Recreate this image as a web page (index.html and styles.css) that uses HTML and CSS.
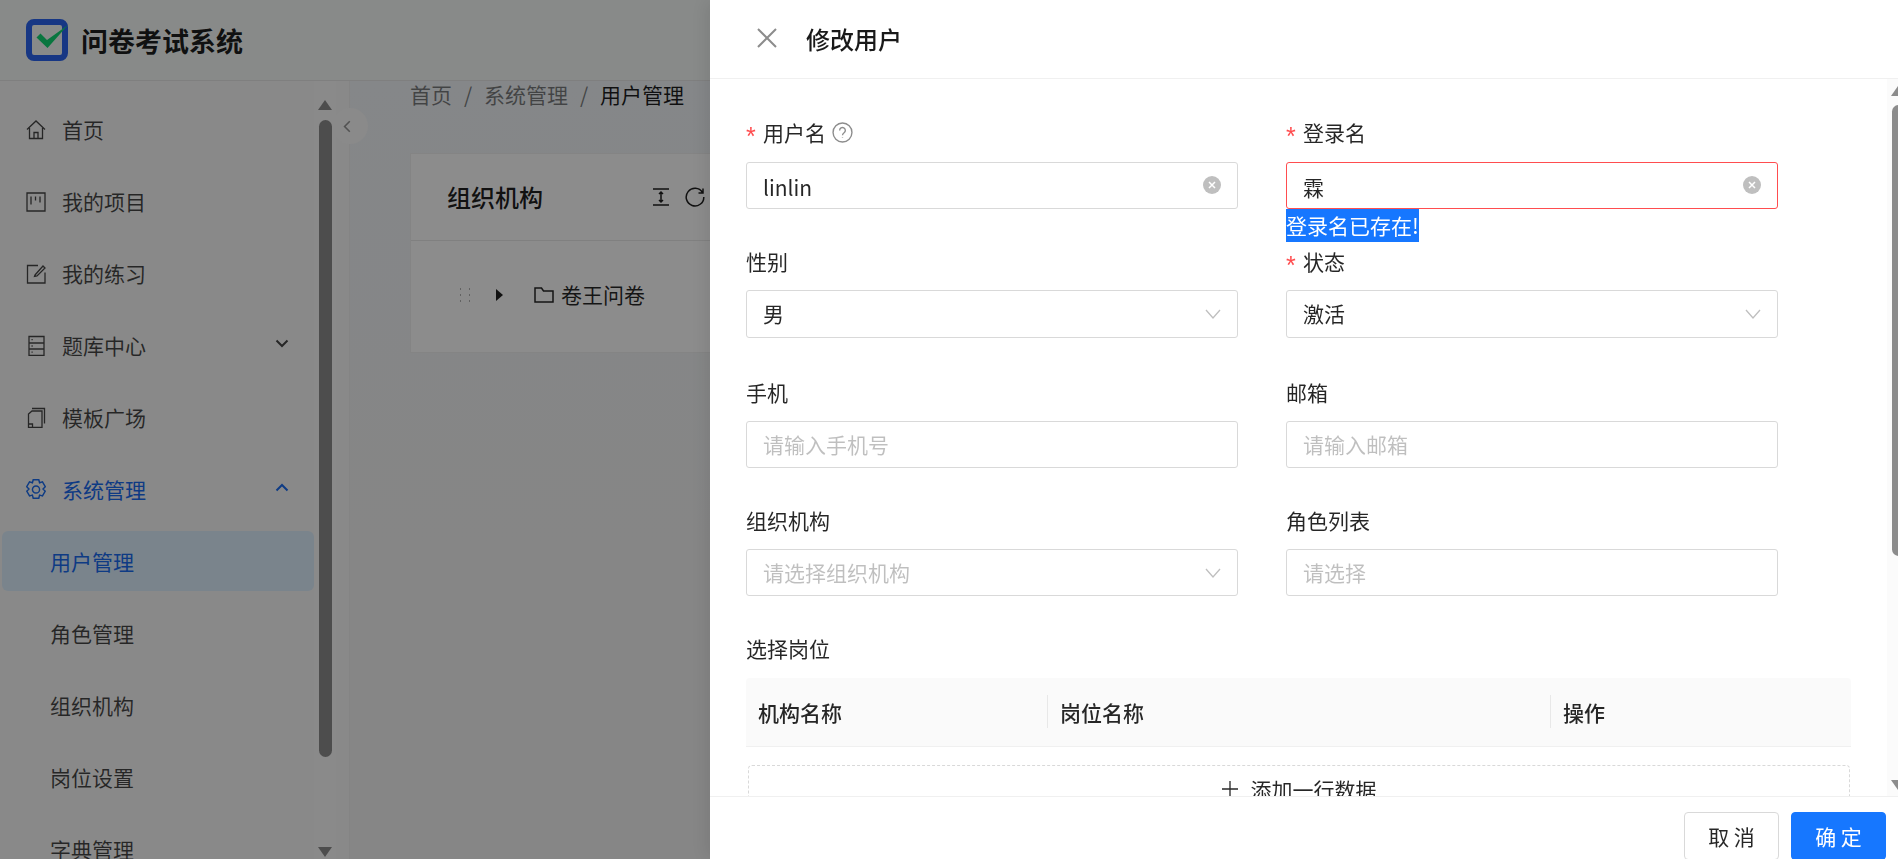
FILE: index.html
```html
<!DOCTYPE html>
<html lang="zh-CN">
<head>
<meta charset="utf-8">
<title>修改用户</title>
<link rel="stylesheet" href="styles.css">
</head>
<body>
<div class="app">
  <header class="topbar">
    <svg class="logo" viewBox="0 0 42 42" width="42" height="42">
      <rect class="logo-frame" x="3" y="3" width="36" height="36" rx="5"/>
      <path class="logo-check" d="M10.500 18.500 14.500 14.500 21 21 42 6 21.500 29z"/>
    </svg>
    <span class="brand">问卷考试系统</span>
  </header>
  <div class="shell">
    <aside class="side">
      <nav class="menu">
        <a class="item"><svg class="ico" viewBox="0 0 20 20"><path d="M1 10 10 1.500 19 10M3.500 8.500V19h13V8.500M8 19v-6h4v6"/></svg>首页</a>
        <a class="item"><svg class="ico" viewBox="0 0 20 20"><path d="M1 1.500h18v18H1zM5 5v8M9.500 5v4M14 5v6"/></svg>我的项目</a>
        <a class="item"><svg class="ico" viewBox="0 0 20 20"><path d="M12 2H1.500v17.500H19V9M9 11.500 17 2.500l2 2-8 8-2.500.5z"/></svg>我的练习</a>
        <a class="item"><svg class="ico" viewBox="0 0 20 20"><path d="M3 1h15v19H3zM3 7.500h15M3 13.500h15M5.500 4.200h1.200M5.500 10.500h1.200M5.500 16.700h1.200"/></svg>题库中心<svg class="chev" viewBox="0 0 14 9"><path d="M1.500 1.500 7 7l5.500-5.500"/></svg></a>
        <a class="item"><svg class="ico" viewBox="0 0 20 20"><path d="M6 1h12.500v15M2.500 6.500 6 3.500h10V20H2.500zM2.500 16.500H6.500V20"/></svg>模板广场</a>
        <a class="item active"><svg class="ico" viewBox="1.200 .8 17.600 18.800"><path d="M7.500 1.500h5l.7 2.700 2.600-.8 2.500 4.300-2 2 2 2-2.500 4.300-2.600-.8-.7 2.800h-5l-.7-2.800-2.600.8-2.500-4.300 2-2-2-2 2.500-4.300 2.600.8z"/><circle cx="10" cy="10.200" r="3.200"/></svg>系统管理<svg class="chev" viewBox="0 0 14 9"><path d="M1.500 7.500 7 2l5.500 5.500"/></svg></a>
        <a class="sub selected">用户管理</a>
        <a class="sub">角色管理</a>
        <a class="sub">组织机构</a>
        <a class="sub">岗位设置</a>
        <a class="sub">字典管理</a>
      </nav>
      <div class="side-track">
        <i class="tri up"></i>
        <i class="side-thumb"></i>
        <i class="tri down"></i>
      </div>
    </aside>
    <main class="main">
      <div class="crumbs">
        <span>首页</span><i>/</i><span>系统管理</span><i>/</i><b>用户管理</b>
      </div>
      <section class="card">
        <div class="card-head">
          <h2>组织机构</h2>
          <svg class="tool t1" viewBox="0 0 18 18" width="18" height="18"><path d="M1 1h16M1 17h16M9 4v10M7 6l2-2 2 2M7 12l2 2 2-2"/></svg>
          <svg class="tool" viewBox="0 0 20 20" width="20" height="20"><path d="M17.500 5.500A8.800 8.800 0 1 0 18.800 10M18 1.500v4.500h-4.500"/></svg>
        </div>
        <div class="tree-row">
          <svg class="dots" viewBox="0 0 12 16" width="12" height="16"><path d="M1 1h1v2H1zM10 1h1v2h-1zM1 7h1v2H1zM10 7h1v2h-1zM1 13h1v2H1zM10 13h1v2h-1z"/></svg>
          <i class="caret"></i>
          <svg class="folder" viewBox="0 0 20 16" width="20" height="16"><path d="M1 1h6.500l2 3H19v11H1z"/></svg>
          <span>卷王问卷</span>
        </div>
      </section>
    </main>
    <button class="collapse" type="button"><svg viewBox="0 0 10 16" width="8" height="13"><path d="M8.500 1.500 2 8l6.500 6.500"/></svg></button>
  </div>
</div>

<div class="mask"></div>

<aside class="drawer">
  <header class="d-head">
    <svg class="close" viewBox="0 0 20 20" width="20" height="20"><path d="M1 1l18 18M19 1 1 19"/></svg>
    <h1>修改用户</h1>
  </header>
  <div class="d-body">
    <form class="form">
      <div class="field r1">
        <label class="req">用户名<svg class="help" viewBox="0 0 20 20" width="21" height="21"><circle cx="10" cy="10" r="9"/><path d="M7.300 8a2.700 2.700 0 1 1 4.200 2.200c-1 .7-1.500 1.100-1.500 2.300M10 14.800v.4"/></svg></label>
        <div class="input"><span>linlin</span><i class="clear"><svg viewBox="0 0 18 18" width="18" height="18"><circle cx="9" cy="9" r="9"/><path d="M6 6l6 6M12 6l-6 6"/></svg></i></div>
      </div>
      <div class="field r1">
        <label class="req">登录名</label>
        <div class="input bad"><span>霖</span><i class="clear"><svg viewBox="0 0 18 18" width="18" height="18"><circle cx="9" cy="9" r="9"/><path d="M6 6l6 6M12 6l-6 6"/></svg></i></div>
        <div class="err"><span>登录名已存在!</span></div>
      </div>
      <div class="field r2">
        <label>性别</label>
        <div class="input"><span>男</span><svg class="arrow" viewBox="0 0 16 10" width="16" height="10"><path d="M1 1l7 8 7-8"/></svg></div>
      </div>
      <div class="field r2">
        <label class="req">状态</label>
        <div class="input"><span>激活</span><svg class="arrow" viewBox="0 0 16 10" width="16" height="10"><path d="M1 1l7 8 7-8"/></svg></div>
      </div>
      <div class="field">
        <label>手机</label>
        <div class="input ph"><span>请输入手机号</span></div>
      </div>
      <div class="field">
        <label>邮箱</label>
        <div class="input ph"><span>请输入邮箱</span></div>
      </div>
      <div class="field">
        <label>组织机构</label>
        <div class="input ph"><span>请选择组织机构</span><svg class="arrow" viewBox="0 0 16 10" width="16" height="10"><path d="M1 1l7 8 7-8"/></svg></div>
      </div>
      <div class="field">
        <label>角色列表</label>
        <div class="input ph"><span>请选择</span></div>
      </div>
    </form>
    <div class="posts">
      <label>选择岗位</label>
      <div class="thead">
        <div class="th c1">机构名称</div>
        <div class="th c2">岗位名称</div>
        <div class="th c3">操作</div>
      </div>
      <div class="add"><svg viewBox="0 0 16 16" width="16" height="16"><path d="M8 0v16M0 8h16"/></svg>添加一行数据</div>
    </div>
    <div class="d-track">
      <i class="tri up gray"></i>
      <i class="d-thumb"></i>
      <i class="tri down gray"></i>
    </div>
  </div>
  <footer class="d-foot">
    <button class="btn" type="button">取 消</button>
    <button class="btn primary" type="button">确 定</button>
  </footer>
</aside>
</body>
</html>
```
FILE: styles.css
```css
* { box-sizing: border-box; }
html, body { margin: 0; height: 100%; overflow: hidden; }
body {
  font-family: "Noto Sans CJK SC", "Noto Sans", sans-serif;
  font-size: 21px;
  color: rgba(0, 0, 0, .85);
  background: #f4f5f6;
}
svg { display: block; flex: none; fill: none; stroke: currentColor; }
i { font-style: normal; }

.app { height: 100vh; display: flex; flex-direction: column; }
.topbar {
  height: 81px; flex: none; display: flex; align-items: center; gap: 13px;
  padding-left: 26px; background: #f7fbf9; border-bottom: 1px solid #e8e8e8;
}
.logo { stroke: none; }
.logo-frame { fill: none; stroke: #2a64f0; stroke-width: 6; }
.logo-check { fill: #12d874; stroke: none; }
.brand { font-size: 27px; font-weight: 700; color: rgba(0, 0, 0, .88); }

.shell { flex: 1; display: flex; position: relative; min-height: 0; }
.side {
  width: 350px; flex: none; display: flex; background: #fafafa;
  border-right: 1px solid #f0f0f0; position: relative; overflow: hidden;
}
.menu { width: 314px; padding: 18px 0 0 2px; flex: none; }
.item, .sub { height: 60px; display: flex; align-items: center; margin-bottom: 12px; color: rgba(0, 0, 0, .72); }
.item { padding-left: 24px; position: relative; }
.ico { width: 20px; height: 21px; margin-right: 16px; stroke-width: 1.300; }
.chev { position: absolute; left: 273px; top: 24px; width: 14px; height: 9px; stroke-width: 2; }
.active { color: #1a6cf0; }
.sub { padding-left: 48px; border-radius: 6px; }
.selected { color: #1a6cf0; background: #dff0ff; }

.side-track { width: 22px; flex: none; position: relative; display: flex; flex-direction: column; align-items: center; padding-top: 19px; background: #fcfcfc; }
.side-thumb { width: 13px; height: 637px; margin-top: 10px; border-radius: 7px; background: #8c8c8c; }
.tri { display: block; width: 0; height: 0; border-left: 7px solid transparent; border-right: 7px solid transparent; }
.tri.up { border-bottom: 10px solid #8c8c8c; }
.tri.down { border-top: 10px solid #8c8c8c; position: absolute; bottom: 2px; left: 4px; }

.main {
  flex: 1; min-width: 0; padding: 0 0 0 60px;
  background: linear-gradient(180deg, #f2f6f9 0, #f4f4f4 60%);
}
.crumbs { height: 26px; display: flex; align-items: center; gap: 12px; color: rgba(0, 0, 0, .5); line-height: 26px; }
.crumbs i { width: 8px; text-align: center; }
.crumbs b { font-weight: 400; color: rgba(0, 0, 0, .88); }
.card { margin-top: 46px; height: 200px; background: #fff; border: 1px solid #f0f0f0; }
.card-head { height: 87px; display: flex; align-items: center; padding-left: 36px; border-bottom: 1px solid #eaeaea; }
.card-head h2 { margin: 0 109px 0 0; padding-bottom: 2px; font-size: 24px; font-weight: 500; color: rgba(0, 0, 0, .88); }
.tool { margin-right: 14px; stroke-width: 1.500; color: rgba(0, 0, 0, .88); }
.t1 { margin-right: 15px; }
.tree-row { display: flex; align-items: center; height: 107px; padding-left: 48px; }
.tree-row span { padding-bottom: 2px; }
.dots { stroke: none; fill: rgba(0, 0, 0, .3); margin-right: 25px; }
.caret { width: 0; height: 0; border-top: 6px solid transparent; border-bottom: 6px solid transparent; border-left: 7px solid rgba(0, 0, 0, .88); margin-right: 31px; }
.folder { stroke-width: 1.500; margin-right: 7px; color: rgba(0, 0, 0, .85); }

.collapse {
  position: absolute; left: 332px; top: 27px; width: 36px; height: 36px; padding: 0 0 0 11px;
  border: 0; border-radius: 50%; background: #fbfbfb; color: rgba(0, 0, 0, .4);
}
.collapse svg { stroke-width: 2; }

.mask { position: fixed; inset: 0; background: rgba(0, 0, 0, .45); }

.drawer {
  position: fixed; top: 0; right: 0; bottom: 0; width: 1188px;
  background: #fff; display: flex; flex-direction: column;
  box-shadow: -6px 0 16px rgba(0, 0, 0, .08);
}
.d-head { height: 79px; flex: none; display: flex; align-items: center; padding-left: 47px; border-bottom: 1px solid #f0f0f0; }
.close { stroke-width: 2; color: #8c8c8c; margin-top: -2px; }
.d-head h1 { margin: -2px 0 0 29px; font-size: 24px; font-weight: 500; color: rgba(0, 0, 0, .9); }

.d-body { flex: 1; min-height: 0; position: relative; overflow: hidden; padding: 0 47px 0 36px; }
.form { display: grid; grid-template-columns: 492px 492px; column-gap: 48px; width: 1032px; }
.field { height: 128px; padding-top: 37px; }
.r1 { height: 131px; padding-top: 39px; }
.r2 { height: 131px; }
label { display: flex; align-items: center; height: 29px; line-height: 29px; color: rgba(0, 0, 0, .85); }
.req::before {
  content: "*"; width: 10px; margin-right: 7px; color: #ff4d4f; line-height: 1;
  font-family: "Liberation Sans", sans-serif; font-size: 25px; transform: translateY(4px);
}
.help { margin-left: 6px; stroke: #8c8c8c; stroke-width: 1.300; }
.input {
  height: 47px; margin-top: 14px; display: flex; align-items: center; justify-content: space-between;
  padding: 0 17px; border: 1px solid #d9d9d9; border-radius: 3px; background: #fff;
  color: rgba(0, 0, 0, .85);
}
.input span { margin-top: -2px; margin-left: -1px; }
.r1 .input { margin-top: 15px; }
.r1 .input span { margin-top: 2px; }
.r2 .input { height: 48px; }
.input.bad { border-color: #ff4d4f; }
.input.ph { color: rgba(0, 0, 0, .25); }
.clear { color: #bfbfbf; margin: -1px -1px 0 0; }
.clear svg { fill: currentColor; stroke: none; }
.clear svg path { stroke: #fff; stroke-width: 1.500; fill: none; }
.arrow { stroke: #bfbfbf; stroke-width: 1.300; margin-right: -1px; }
.err { height: 33px; line-height: 33px; color: #fff; }
.err span { display: inline-block; height: 33px; background: #1677ff; white-space: nowrap; }

.posts { padding-top: 37px; }
.thead { display: flex; height: 69px; margin-top: 15px; width: 1105px; align-items: center; background: #fafafa; border-bottom: 1px solid #f0f0f0; border-radius: 4px 4px 0 0; font-weight: 500; color: rgba(0, 0, 0, .85); }
.th { padding-left: 13px; position: relative; }
.c1 { width: 301px; padding-left: 12px; }
.c2 { width: 503px; }
.c3 { flex: 1; }
.c2::before, .c3::before { content: ""; position: absolute; left: 0; top: -2px; height: 33px; width: 1px; background: #e8e8e8; }
.add {
  margin: 18px 0 0 2px; width: 1102px; height: 60px; display: flex; align-items: center; justify-content: center; gap: 13px;
  padding-bottom: 13px; border: 1px dashed #d9d9d9; border-radius: 4px;
}
.add svg { stroke-width: 1.300; }

.d-track { position: absolute; top: 0; right: 0; bottom: 0; width: 11px; background: #fbfbfb; overflow: hidden; }
.d-thumb { position: absolute; top: 26px; left: 5px; width: 13px; height: 451px; border-radius: 7px; background: #8c8c8c; }
.tri.gray { position: absolute; left: 4px; }
.tri.gray.up { top: 7px; border-bottom: 10px solid #8c8c8c; }
.tri.gray.down { bottom: 6px; border-top: 10px solid #8c8c8c; }

.d-foot { height: 63px; flex: none; display: flex; justify-content: flex-end; gap: 12px; padding: 15px 12px 0 0; border-top: 1px solid #f0f0f0; background: #fff; }
.btn { width: 95px; height: 48px; flex: none; font: inherit; border: 1px solid #d9d9d9; border-radius: 4px; background: #fff; color: rgba(0, 0, 0, .85); }
.btn.primary { background: #1677ff; border-color: #1677ff; color: #fff; }
```
